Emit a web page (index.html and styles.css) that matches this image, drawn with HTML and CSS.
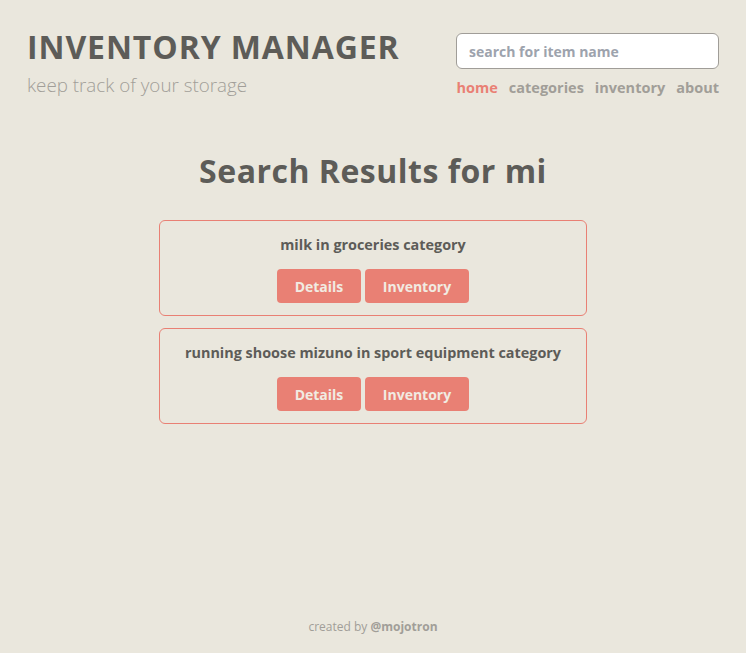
FILE: index.html
```html
<!DOCTYPE html>
<html lang="en">
<head>
<meta charset="utf-8">
<title>Inventory Manager</title>
<link rel="stylesheet" href="styles.css">
</head>
<body>
<div class="page">
  <header class="header">
    <div class="brand">
      <h1 class="brand-title">INVENTORY MANAGER</h1>
      <p class="brand-sub">keep track of your storage</p>
    </div>
    <div class="side">
      <input class="search" type="text" placeholder="search for item name">
      <nav class="nav">
        <a class="nav-link active" href="#">home</a>
        <a class="nav-link" href="#">categories</a>
        <a class="nav-link" href="#">inventory</a>
        <a class="nav-link" href="#">about</a>
      </nav>
    </div>
  </header>
  <main class="main">
    <h2 class="results-title">Search Results for mi</h2>
    <div class="card">
      <p class="card-text">milk in groceries category</p>
      <div class="card-actions">
        <button class="btn btn-details">Details</button>
        <button class="btn btn-inv">Inventory</button>
      </div>
    </div>
    <div class="card">
      <p class="card-text">running shoose mizuno in sport equipment category</p>
      <div class="card-actions">
        <button class="btn btn-details">Details</button>
        <button class="btn btn-inv">Inventory</button>
      </div>
    </div>
  </main>
  <footer class="footer">created by <b>@mojotron</b></footer>
</div>
</body>
</html>
```
FILE: styles.css
```css
* { box-sizing: border-box; }
html, body { margin: 0; padding: 0; }
body {
  background: #eae7dd;
  font-family: "Open Sans", "Noto Sans", sans-serif;
  color: #5d5c58;
}
.page {
  min-height: 653px;
  display: flex;
  flex-direction: column;
}
.header {
  display: flex;
  justify-content: space-between;
  padding: 28px 27px 0 27px;
}
.brand-title {
  margin: 0;
  font-family: "Open Sans", sans-serif;
  font-weight: 700;
  font-size: 32px;
  letter-spacing: 0.9px;
  line-height: 38px;
  color: #5d5c58;
}
.brand-sub {
  margin: 7px 0 0 0;
  font-family: "Open Sans", sans-serif;
  font-weight: 300;
  font-size: 18.8px;
  line-height: 24px;
  color: #a19e98;
}
.side {
  display: flex;
  flex-direction: column;
  align-items: flex-end;
  padding-top: 5px;
}
.search {
  width: 263px;
  height: 36px;
  border: 1px solid #a09d98;
  border-radius: 6px;
  background: #fff;
  padding: 0 12px;
  font-family: "Open Sans", sans-serif;
  font-weight: 700;
  font-size: 14px;
  outline: none;
}
.search::placeholder { color: #9da3ad; }
.nav {
  display: flex;
  gap: 11px;
  margin-top: 8px;
}
.nav-link {
  text-decoration: none;
  font-weight: 700;
  font-size: 14.5px;
  line-height: 22px;
  color: #a19e98;
}
.nav-link.active { color: #e98074; }
.main {
  display: flex;
  flex-direction: column;
  align-items: center;
  flex: 1;
}
.results-title {
  margin: 52px 0 29px 0;
  font-family: "Open Sans", sans-serif;
  font-weight: 700;
  font-size: 32px;
  letter-spacing: 0.5px;
  line-height: 40px;
  color: #5d5c58;
}
.card {
  width: 428px;
  border: 1px solid #e98074;
  border-radius: 6px;
  padding: 13px 10px 12px 10px;
  margin-bottom: 12px;
  text-align: center;
}
.card-text {
  margin: 0;
  font-weight: 700;
  font-size: 14.4px;
  line-height: 22px;
  color: #5d5c58;
}
.card-actions {
  display: flex;
  justify-content: center;
  gap: 4px;
  margin-top: 13px;
}
.btn {
  border: none;
  background: #e98074;
  color: #f1ebe2;
  font-family: "Open Sans", sans-serif;
  font-weight: 700;
  font-size: 14px;
  height: 34px;
  border-radius: 4px;
  padding: 0;
}
.btn-details { width: 84px; }
.btn-inv { width: 104px; }
.footer {
  text-align: center;
  font-size: 12px;
  color: #a19e98;
  padding-bottom: 18px;
}
.footer b { font-weight: 700; }
```
